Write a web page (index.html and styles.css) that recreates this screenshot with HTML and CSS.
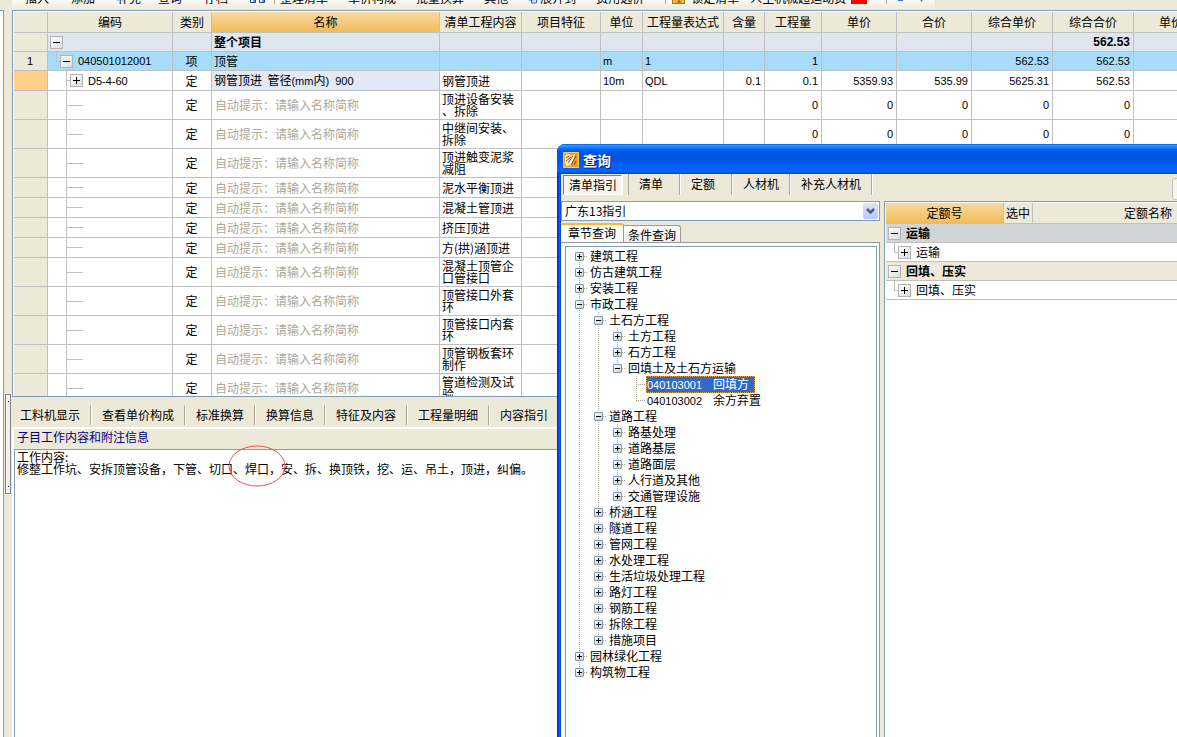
FILE: index.html
```html
<!DOCTYPE html>
<html lang="zh-CN">
<head>
<meta charset="utf-8">
<title>查询</title>
<link rel="stylesheet" href="styles.css">
</head>
<body>
<div class="app">
  <aside class="side"><div class="side-panel"></div></aside>
  <div class="splitter"><div class="splitter-grip"></div></div>
  <main class="main">
    <div class="toolbar">
      <div class="tools">
        <div class="tool-group first">
          <button class="tool">插入</button><button class="tool">添加</button><button class="tool tight">补充</button><button class="tool">查询</button><button class="tool">存档</button>
          <svg class="tool-icon" width="16" height="12" viewBox="0 0 16 12"><path d="M0.500 0h5v10.500h-5zM9.500 0h5v10.500h-5z" fill="#6f9be0" stroke="#23418c"/><path d="M1 7h2v3H1zM10 7h2v3h-2z" fill="#fff"/></svg>
        </div>
        <div class="tool-group second">
          <button class="tool">整理清单</button><button class="tool">单价构成</button><button class="tool">批量换算</button><button class="tool">其他</button>
          <svg class="tool-icon" width="12" height="12" viewBox="0 0 12 12"><path d="M0.500 2h5v6h-5zM3.500 4h5v7h-5z" fill="#dfe9fb" stroke="#3b62a8"/></svg>
          <button class="tool">展开到</button><button class="tool">费用选价</button>
        </div>
        <div class="tool-group third">
          <svg class="tool-icon" width="13" height="12" viewBox="0 0 13 12"><rect x="0.500" y="0.500" width="12" height="11" fill="#f0b840" stroke="#a87818"/><path d="M6 5h1v5M5 10h4" fill="none" stroke="#7a5208"/></svg>
          <button class="tool">锁定清单</button><button class="tool">人主机械超运动费</button>
          <span class="red-mark"></span>
        </div>
        <div class="tool-group fourth">
          <svg width="32" height="12" viewBox="0 0 32 12"><path d="M0 6h5v3H0zM21 6h5l-2.500 4z" fill="#3a6fd8"/></svg>
        </div>
      </div>
    </div>

    <div class="grid-view">
      <table class="grid">
        <colgroup><col class="w-no"><col class="w-code"><col class="w-kind"><col class="w-name"><col class="w-work"><col class="w-feat"><col class="w-unit"><col class="w-expr"><col class="w-rate"><col class="w-qty"><col class="w-price"><col class="w-price"><col class="w-total"><col class="w-total"><col class="w-price"></colgroup>
        <thead>
          <tr><th></th><th>编码</th><th>类别</th><th class="active">名称</th><th>清单工程内容</th><th>项目特征</th><th>单位</th><th>工程量表达式</th><th>含量</th><th>工程量</th><th>单价</th><th>合价</th><th>综合单价</th><th>综合合价</th><th>单价</th></tr>
        </thead>
        <tbody>
          <tr class="root"><td class="no"></td><td class="code"><div class="node n0"><button class="fold" aria-label="折叠"></button></div></td><td></td><td>整个项目</td><td></td><td></td><td></td><td></td><td></td><td></td><td></td><td></td><td></td><td class="num">562.53</td><td></td></tr>
          <tr class="item"><td class="no">1</td><td class="code"><div class="node n1"><span class="elbow"></span><button class="fold" aria-label="折叠"></button><span class="latin">040501012001</span></div></td><td class="kind">项</td><td>顶管</td><td></td><td></td><td class="latin">m</td><td class="latin">1</td><td></td><td class="num">1</td><td></td><td></td><td class="num">562.53</td><td class="num">562.53</td><td></td></tr>
          <tr class="quota"><td class="no current"></td><td class="code"><div class="node n2"><span class="dash"></span><button class="fold plus" aria-label="展开"></button><span class="latin">D5-4-60</span></div></td><td class="kind">定</td><td class="picked">钢管顶进&nbsp; 管径<span class="latin">(mm</span>内<span class="latin">)&nbsp; 900</span></td><td>钢管顶进</td><td></td><td class="latin">10m</td><td class="latin">QDL</td><td class="num">0.1</td><td class="num">0.1</td><td class="num">5359.93</td><td class="num">535.99</td><td class="num">5625.31</td><td class="num">562.53</td><td></td></tr>
        </tbody>
        <tbody id="hints"></tbody>
      </table>
    </div>

    <section class="detail">
      <nav class="detail-tabs"><button>工料机显示</button><button>查看单价构成</button><button>标准换算</button><button>换算信息</button><button>特征及内容</button><button>工程量明细</button><button>内容指引</button></nav>
      <div class="detail-body">
        <label class="detail-title" for="note">子目工作内容和附注信息</label>
        <textarea id="note" class="note" spellcheck="false">工作内容:
修整工作坑、安拆顶管设备，下管、切口、焊口，安、拆、换顶铁，挖、运、吊土，顶进，纠偏。</textarea>
        <svg class="circle" width="58" height="42" viewBox="0 0 58 42"><ellipse cx="29" cy="21" rx="28" ry="20" fill="none" stroke="#f05050"/></svg>
      </div>
    </section>
  </main>
</div>

<div class="dialog" role="dialog" aria-labelledby="dialog-title">
  <header class="titlebar">
    <svg width="16" height="16" viewBox="0 0 16 16"><rect x="0.500" y="0.500" width="15" height="15" fill="#f0a020" stroke="#f8c860"/><path d="M2 3l4-1 2 2 4-2-1 4-3 7-5 1-1-4z" fill="#fff8e0"/><path d="M3 6l3-2M3 9l5-4M5 11l5-7M8 13l5-9M11 13l2-4" stroke="#8a3c08" fill="none"/></svg>
    <h1 id="dialog-title">查询</h1>
  </header>
  <div class="dialog-content">
    <div class="modes">
      <button class="mode on">清单指引</button><button class="mode">清单</button><button class="mode">定额</button><button class="mode">人材机</button><button class="mode">补充人材机</button>
      <button class="more" aria-label="更多"></button>
    </div>
    <div class="panes">
      <div class="left-pane">
        <div class="combo">
          <select aria-label="指引"><option>广东13指引</option></select>
          <span class="combo-arrow"><svg width="9" height="7" viewBox="0 0 9 7"><path d="M1 1l3.500 3.500L8 1" fill="none" stroke="#4d6185" stroke-width="2.500"/></svg></span>
        </div>
        <div class="tabs"><button class="tab on">章节查询</button><button class="tab">条件查询</button></div>
        <div class="tab-page"><div class="tree-box"><ul class="tree" id="tree"></ul></div></div>
      </div>
      <div class="right-pane">
        <table class="result">
          <colgroup><col class="r-no"><col class="r-pick"><col class="r-name"></colgroup>
          <thead><tr><th class="active">定额号</th><th>选中</th><th>定额名称</th></tr></thead>
          <tbody>
            <tr class="group gray"><td colspan="3"><div class="node n0"><button class="fold" aria-label="折叠"></button><span>运输</span></div></td></tr>
            <tr><td colspan="3"><div class="node n1"><span class="elbow"></span><button class="fold plus" aria-label="展开"></button><span>运输</span></div></td></tr>
            <tr class="group"><td colspan="3"><div class="node n0"><button class="fold" aria-label="折叠"></button><span>回填、压实</span></div></td></tr>
            <tr><td colspan="3"><div class="node n1"><span class="elbow"></span><button class="fold plus" aria-label="展开"></button><span>回填、压实</span></div></td></tr>
          </tbody>
        </table>
      </div>
    </div>
  </div>
</div>
<script src="app.js"></script>
</body>
</html>
```
FILE: app.js
```js
const works = [
  ['顶进设备安装', '、拆除'], ['中继间安装、', '拆除'], ['顶进触变泥浆', '减阻'],
  ['泥水平衡顶进'], ['混凝土管顶进'], ['挤压顶进'], ['方(拱)涵顶进'],
  ['混凝土顶管企', '口管接口'], ['顶管接口外套', '环'], ['顶管接口内套', '环'],
  ['顶管钢板套环', '制作'], ['管道检测及试', '验']
];
document.getElementById('hints').innerHTML = works.map(lines => {
  const zero = '<td class="num">0</td>';
  return `<tr class="${lines.length > 1 ? 'tall' : 'short'}"><td class="no"></td><td class="code"><div class="node n2"><span class="dash long"></span></div></td>` +
    `<td class="kind">定</td><td class="hint">自动提示：请输入名称简称</td><td>${lines.join('<br>')}</td>` +
    `<td></td><td></td><td></td><td></td>${zero.repeat(5)}<td></td></tr>`;
}).join('');

const chapters = [
  ['建筑工程'], ['仿古建筑工程'], ['安装工程'],
  ['市政工程', [
    ['土石方工程', [
      ['土方工程'], ['石方工程'],
      ['回填土及土石方运输', [
        { code: '040103001', name: '回填方', selected: true },
        { code: '040103002', name: '余方弃置' }
      ]]
    ]],
    ['道路工程', [['路基处理'], ['道路基层'], ['道路面层'], ['人行道及其他'], ['交通管理设施']]],
    ['桥涵工程'], ['隧道工程'], ['管网工程'], ['水处理工程'], ['生活垃圾处理工程'],
    ['路灯工程'], ['钢筋工程'], ['拆除工程'], ['措施项目']
  ]],
  ['园林绿化工程'], ['构筑物工程']
];
const branch = node => {
  if (node.code) {
    return `<li><div class="row leaf"><span class="dots"></span><span class="label${node.selected ? ' selected' : ''}"><span class="code-no">${node.code}</span>${node.name}</span></div></li>`;
  }
  const [name, children] = node;
  return `<li><div class="row"><button class="toggle${children ? '' : ' plus'}" aria-label="${children ? '折叠' : '展开'}"></button><span class="dots"></span><span class="label">${name}</span></div>` +
    (children ? `<ul>${children.map(branch).join('')}</ul>` : '') + '</li>';
};
document.getElementById('tree').innerHTML = chapters.map(branch).join('');
```
FILE: styles.css
```css
:root {
  --face: #ece9d8;
  --line: #c0c0c0;
  --edge: #7f9db9;
}
* { box-sizing: border-box; }
body {
  margin: 0;
  height: 100vh;
  overflow: hidden;
  position: relative;
  background: var(--face);
  color: #000;
  font: 12px/12px "Noto Sans CJK SC", sans-serif;
}
button {
  margin: 0;
  padding: 0;
  border: 0;
  background: none;
  color: inherit;
  font: inherit;
  white-space: nowrap;
}
.app { display: flex; height: 100%; }
.side { flex: none; width: 4px; padding-top: 10px; }
.side-panel { height: 100%; background: #fff; border: solid var(--edge); border-width: 1px 1px 0 0; }
.splitter { flex: none; width: 8px; padding: 394px 1px 0; }
.splitter-grip {
  height: 100px;
  background: linear-gradient(#000080, #000080) 2px 6px / 1px 1px no-repeat,
    linear-gradient(#000080, #000080) 2px 91px / 1px 1px no-repeat, #f4f2e8;
  border: 1px solid #848484;
}
.main { flex: 1; min-width: 0; display: grid; grid-template-rows: 10px 387px 1fr; }

.toolbar { display: flex; align-items: flex-end; overflow: hidden; }
.tools {
  flex: none;
  display: flex;
  align-items: flex-end;
  height: 20px;
  padding-bottom: 6px;
  background: linear-gradient(#fbfaf4 50%, #ece9d8);
  width: 923px;
}
.tool-group { display: flex; align-items: flex-end; }
.first { padding-left: 13px; }
.first .tool { padding-right: 22px; }
.first .tight { padding-right: 17px; }
.second { margin-left: 8px; padding-left: 5px; border-left: 1px solid #aca899; }
.second .tool { padding-right: 20px; }
.third { margin-left: 1px; padding-left: 6px; border-left: 1px solid #aca899; }
.third .tool { padding: 0 5px 0 6px; }
.fourth { margin-left: 19px; padding-left: 11px; border-left: 1px solid #aca899; }
.red-mark { width: 16px; height: 4px; background: #f00; }

.grid-view { overflow: hidden; background: #fff; border: 1px solid var(--edge); border-right: 0; padding: 1px 0 1px 1px; }
table { border-collapse: separate; border-spacing: 0; table-layout: fixed; }
th, td {
  padding: 0 3px 0 2px;
  border: solid var(--line);
  border-width: 0 1px 1px 0;
  text-align: left;
  font-weight: normal;
  white-space: nowrap;
  overflow: hidden;
}
th { height: 21px; padding: 0; background: var(--face); text-align: center; }
th.active { background: linear-gradient(#f9d9a0, #f0bc5a); }
.grid { width: 1195px; }
.w-no { width: 34px; }
.w-code { width: 125px; }
.w-kind { width: 39px; }
.w-name { width: 228px; }
.w-work { width: 82px; }
.w-feat { width: 79px; }
.w-unit { width: 42px; }
.w-expr { width: 81px; }
.w-rate { width: 41px; }
.w-qty { width: 57px; }
.w-price { width: 75px; }
.w-total { width: 81px; }
.root td, .item td { height: 19px; }
.root td { background: #dee6f0; font-weight: bold; }
.item td { background: #a8dcfb; }
.quota td, .short td { height: 20px; }
.tall td { height: 29px; }
.grid td.no { background: var(--face); text-align: center; font: 11px/12px "Liberation Sans", sans-serif; }
.grid td.current { background: #ffd088; }
.grid td.picked { background: #e0e9f5; }
.grid .kind { text-align: center; }
.grid .hint { padding-left: 3px; color: #aca899; }
.latin, td.num { font-family: "Liberation Sans", sans-serif; font-size: 11px; }
td.num { text-align: right; }
.root td.num { font-size: 12px; }
td.code, .result td { padding: 0; }

.node { display: flex; align-items: center; height: 18px; }
.n0 { padding-left: 2px; }
.n1 { padding-left: 8px; }
.n2 { height: 19px; margin-left: 18px; border-left: 1px solid var(--line); }
.tall .n2 { height: 28px; }
.elbow { align-self: flex-start; width: 4px; height: 10px; border: solid var(--line); border-width: 0 0 1px 1px; }
.dash { width: 3px; height: 1px; background: var(--line); }
.dash.long { width: 16px; }
.fold {
  flex: none;
  width: 13px;
  height: 13px;
  margin-right: 5px;
  border: 1px solid #b4b4b4;
  background: linear-gradient(90deg, #000, #000) center / 7px 1px no-repeat, linear-gradient(135deg, #fff, #dcdcdc);
}
.fold.plus {
  background: linear-gradient(#000, #000) center / 7px 1px no-repeat, linear-gradient(#000, #000) center / 1px 7px no-repeat, linear-gradient(135deg, #fff, #dcdcdc);
}

.detail { display: flex; flex-direction: column; min-height: 0; }
.detail-tabs { display: flex; align-items: center; height: 30px; padding-top: 5px; white-space: nowrap; }
.detail-tabs button { height: 20px; padding: 0 10px; border-right: 1px solid #aca899; box-shadow: 1px 0 #fff; margin-right: 1px; }
.detail-tabs button:first-child { padding-left: 8px; }
.detail-tabs button:last-child { border: 0; box-shadow: none; }
.detail-body { position: relative; flex: 1; display: flex; flex-direction: column; border: solid #fff; border-width: 2px 0 0 2px; }
.detail-title { padding: 1px 3px 5px; height: 20px; line-height: 14px; color: #000080; }
.note {
  flex: 1;
  width: 100%;
  padding: 1px 2px;
  border: 1px solid var(--edge);
  border-bottom: 0;
  outline: 0;
  resize: none;
  background: #fff;
  color: #000;
  font: inherit;
}
.circle { position: absolute; left: 214px; top: 16px; }

.dialog {
  position: absolute;
  inset: 144px 0 0 557px;
  display: flex;
  flex-direction: column;
  overflow: hidden;
  border-radius: 8px 0 0 0;
  background: linear-gradient(90deg, #0019cf, #0831d9 1px, #1660ec 2px, #0855dd 3px, #0044d0 4px);
}
.titlebar {
  display: flex;
  align-items: center;
  gap: 4px;
  height: 30px;
  padding: 2px 0 0 6px;
  background: linear-gradient(#0058ee, #3593ff 5%, #288eff 8%, #127dff 12%, #036ffc 16%, #0262ee 20%, #0057e5 26%, #0054e3 50%, #0060f8 72%, #0066fc 88%, #005bec 94%, #0040c0);
}
.titlebar h1 { margin: 0; color: #fff; font-size: 14px; line-height: 16px; text-shadow: 1px 1px #0a1883; }
.dialog-content { flex: 1; min-height: 0; margin-left: 4px; display: flex; flex-direction: column; background: var(--face); }
.modes { display: flex; height: 27px; padding: 0 0 6px 2px; }
.mode { min-width: 52px; height: 21px; padding: 0 10px 2px 11px; border-right: 1px solid #aca899; box-shadow: 1px 0 #fff; text-align: left; }
.mode.on {
  height: 20px;
  margin: 1px 6px 0 0;
  padding: 0 4px 0 5px;
  border: 1px solid #848078;
  border-right-color: #fff;
  border-bottom-color: #fff;
  background: #f6f4ec;
}
.mode.on + .mode { border-left: 1px solid #aca899; padding-left: 10px; }
.more { flex: none; width: 20px; height: 22px; margin: 4px -15px 0 auto; border: 1px solid #c9c7ba; border-radius: 3px; background: #f5f4ee; }
.panes { flex: 1; min-height: 0; display: grid; grid-template-columns: 319px 1fr; gap: 4px; }
.left-pane { display: flex; flex-direction: column; min-height: 0; }
.combo { display: flex; align-items: center; height: 20px; background: #fff; border: 1px solid var(--edge); }
.combo select { flex: 1; padding: 0 0 0 3px; border: 0; outline: 0; appearance: none; background: none; color: #000; font: inherit; }
.combo-arrow { display: grid; place-items: center; width: 15px; height: 16px; margin-right: 1px; border-radius: 2px; background: linear-gradient(#dce6fd, #b4c8f6); }
.tabs { display: flex; align-items: flex-end; height: 20px; margin-top: 1px; }
.tab { height: 17px; padding: 1px 4px 0; border: 1px solid #919b9c; border-bottom: 0; border-left: 0; border-radius: 0 3px 0 0; background: linear-gradient(#fff, #f0efe4); }
.tab.on { height: 19px; margin-bottom: 0; padding: 0 7px 1px; border: solid #919b9c; border-width: 2px 1px 0 0; border-top-color: #ffb733; border-radius: 3px 3px 0 0; background: #fcfcfa; }
.tab-page { flex: 1; min-height: 0; padding: 3px 2px 0 4px; border: solid #919b9c; border-width: 1px 1px 0 0; background: #fcfcfa; }
.tree-box { height: 100%; overflow: hidden; background: #fff; border: solid var(--edge); border-width: 1px 1px 0; }
.tree, .tree ul { list-style: none; margin: 0; padding: 0; }
.tree { padding: 1px 0 0 9px; }
.tree ul { padding-left: 19px; }
.tree li { background: repeating-linear-gradient(#aca899 0 1px, transparent 1px 2px) 4px 0 / 1px 100% no-repeat; }
.tree li:last-child { background-size: 1px 8px; }
.tree > li:first-child { background-position: 4px 8px; }
.row { display: flex; align-items: center; height: 16px; white-space: nowrap; }
.toggle { width: 9px; height: 9px; border: 1px solid #7898b5; border-radius: 1px; background: linear-gradient(#000, #000) center / 5px 1px no-repeat, linear-gradient(135deg, #fff, #d0ccc0); }
.toggle.plus { background: linear-gradient(#000, #000) center / 5px 1px no-repeat, linear-gradient(#000, #000) center / 1px 5px no-repeat, linear-gradient(135deg, #fff, #d0ccc0); }
.dots { width: 4px; height: 1px; background: repeating-linear-gradient(90deg, #aca899 0 1px, transparent 1px 2px); }
.leaf .dots { width: 10px; margin-left: 4px; }
.label { padding: 0 2px; line-height: 14px; }
.leaf .label { padding: 0 5px 0 0; border: 1px solid transparent; }
.leaf .selected { background: #316ac5; color: #fff; border: 1px dotted #e8a040; }
.code-no { display: inline-block; width: 66px; font-family: "Liberation Sans", sans-serif; font-size: 11px; }

.right-pane { min-width: 0; overflow: hidden; padding: 1px 0 0 1px; background: #fff; border: solid var(--edge); border-width: 1px 0 0 1px; }
.result { width: 378px; }
.r-no { width: 118px; }
.r-pick { width: 29px; }
.r-name { width: 231px; }
.result td { height: 19px; }
.result .group td { background: var(--face); font-weight: bold; }
.result .gray td { background: #d0d5d6; }
```
